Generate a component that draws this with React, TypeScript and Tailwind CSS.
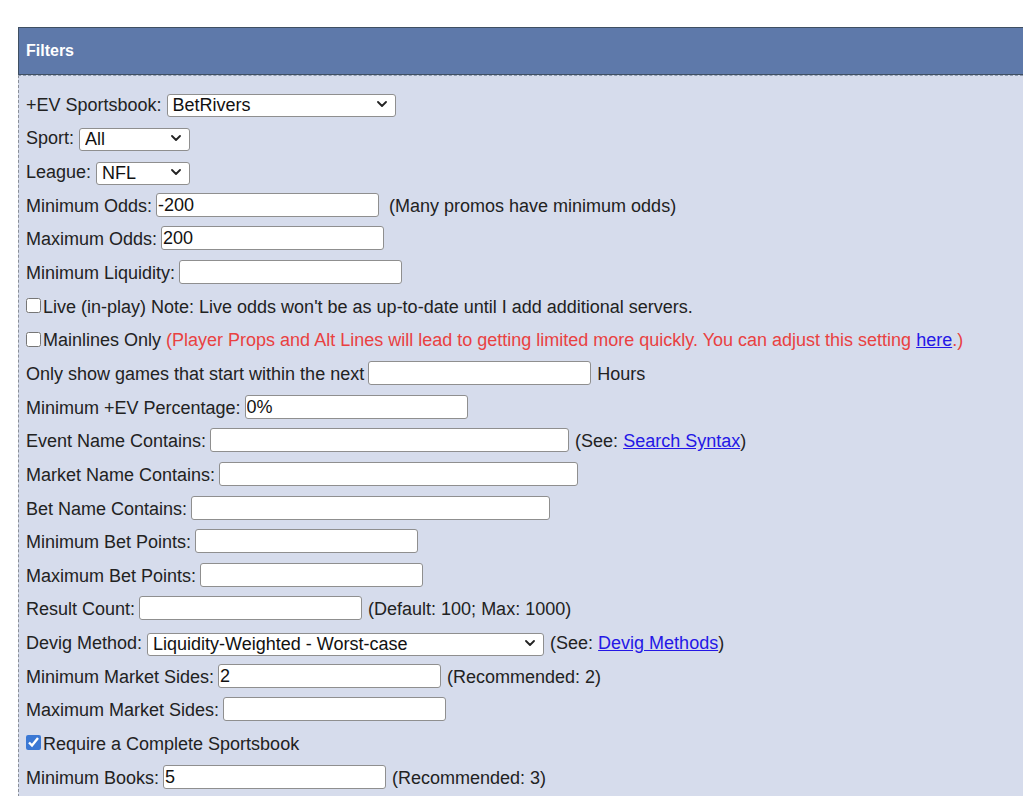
import React from "react";

const font = { fontFamily: '"Liberation Sans", Arial, sans-serif' };

function Row({ children }: { children: React.ReactNode }) {
  return (
    <div className="flex h-[33.65px] items-center whitespace-nowrap [&>span]:mt-[3px]">
      {children}
    </div>
  );
}

function TextInput({ value = "", width = "w-[223px]", className = "" }: { value?: string; width?: string; className?: string }) {
  return (
    <input
      type="text"
      defaultValue={value}
      className={`${width} h-[24px] rounded-[3px] border border-[#8f8f8f] bg-white px-[1px] pt-[1px] text-[18px] leading-[21px] text-[#111] outline-none ${className}`}
    />
  );
}

function Select({ value, width }: { value: string; width: string }) {
  return (
    <div className={`relative ml-[5px] ${width} h-[23px]`}>
      <select
        defaultValue={value}
        className="h-full w-full appearance-none rounded-[3px] border border-[#8f8f8f] bg-white pl-[5px] pr-[20px] text-[18px] leading-[21px] text-[#111] outline-none"
      >
        <option>{value}</option>
      </select>
      <svg
        className="pointer-events-none absolute right-[9px] top-[9px]"
        width="10"
        height="6"
        viewBox="0 0 10 6"
        fill="none"
      >
        <path d="M1 1l4 4 4-4" stroke="#222" strokeWidth="1.8" strokeLinecap="round" strokeLinejoin="round" />
      </svg>
    </div>
  );
}

function Check({ checked = false }: { checked?: boolean }) {
  return (
    <input
      type="checkbox"
      defaultChecked={checked}
      className="m-0 mr-[2px] h-[15px] w-[15px] accent-[#3b78d4]"
    />
  );
}

const Link = ({ children }: { children: React.ReactNode }) => (
  <a href="#" className="text-[#2417e6] underline">
    {children}
  </a>
);

export default function App() {
  return (
    <div className="min-h-screen bg-white pt-[27px] text-[18px] text-[#222]" style={font}>
      <div className="ml-[18px]">
        <div className="flex h-[48px] items-center border-y border-l border-y-[#3f4f62] border-l-[#3f4f62] bg-[#5e79aa] pl-[7px] text-[16px] font-bold text-white">
          Filters
        </div>
        <div className="border-l border-t border-dashed border-l-[#8a8f99] border-t-[#8e9ab0] border-t-solid bg-[#d6dcec] pl-[7px] pt-[11px] pb-[4px]">
          <Row>
            <span>+EV Sportsbook:</span>
            <Select value="BetRivers" width="w-[229px]" />
          </Row>
          <Row>
            <span>Sport:</span>
            <Select value="All" width="w-[111px]" />
          </Row>
          <Row>
            <span>League:</span>
            <Select value="NFL" width="w-[94px]" />
          </Row>
          <Row>
            <span>Minimum Odds:</span>
            <TextInput value="-200" className="ml-[4px]" />
            <span className="ml-[10px]">(Many promos have minimum odds)</span>
          </Row>
          <Row>
            <span>Maximum Odds:</span>
            <TextInput value="200" className="ml-[4px]" />
          </Row>
          <Row>
            <span>Minimum Liquidity:</span>
            <TextInput className="ml-[4px]" />
          </Row>
          <Row>
            <Check />
            <span>Live (in-play) Note: Live odds won't be as up-to-date until I add additional servers.</span>
          </Row>
          <Row>
            <Check />
            <span>Mainlines Only</span>
            <span className="ml-[5px] text-[#e94141]">
              (Player Props and Alt Lines will lead to getting limited more quickly. You can adjust this setting{" "}
              <Link>here</Link>.)
            </span>
          </Row>
          <Row>
            <span>Only show games that start within the next</span>
            <TextInput className="ml-[4px]" />
            <span className="ml-[6px]">Hours</span>
          </Row>
          <Row>
            <span>Minimum +EV Percentage:</span>
            <TextInput value="0%" className="ml-[4px]" />
          </Row>
          <Row>
            <span>Event Name Contains:</span>
            <TextInput width="w-[359px]" className="ml-[4px]" />
            <span className="ml-[6px]">
              (See: <Link>Search Syntax</Link>)
            </span>
          </Row>
          <Row>
            <span>Market Name Contains:</span>
            <TextInput width="w-[359px]" className="ml-[4px]" />
          </Row>
          <Row>
            <span>Bet Name Contains:</span>
            <TextInput width="w-[359px]" className="ml-[4px]" />
          </Row>
          <Row>
            <span>Minimum Bet Points:</span>
            <TextInput className="ml-[4px]" />
          </Row>
          <Row>
            <span>Maximum Bet Points:</span>
            <TextInput className="ml-[4px]" />
          </Row>
          <Row>
            <span>Result Count:</span>
            <TextInput className="ml-[4px]" />
            <span className="ml-[6px]">(Default: 100; Max: 1000)</span>
          </Row>
          <Row>
            <span>Devig Method:</span>
            <Select value="Liquidity-Weighted - Worst-case" width="w-[397px]" />
            <span className="ml-[6px]">
              (See: <Link>Devig Methods</Link>)
            </span>
          </Row>
          <Row>
            <span>Minimum Market Sides:</span>
            <TextInput value="2" className="ml-[4px]" />
            <span className="ml-[6px]">(Recommended: 2)</span>
          </Row>
          <Row>
            <span>Maximum Market Sides:</span>
            <TextInput className="ml-[4px]" />
          </Row>
          <Row>
            <Check checked />
            <span>Require a Complete Sportsbook</span>
          </Row>
          <Row>
            <span>Minimum Books:</span>
            <TextInput value="5" className="ml-[4px]" />
            <span className="ml-[6px]">(Recommended: 3)</span>
          </Row>
        </div>
      </div>
    </div>
  );
}
